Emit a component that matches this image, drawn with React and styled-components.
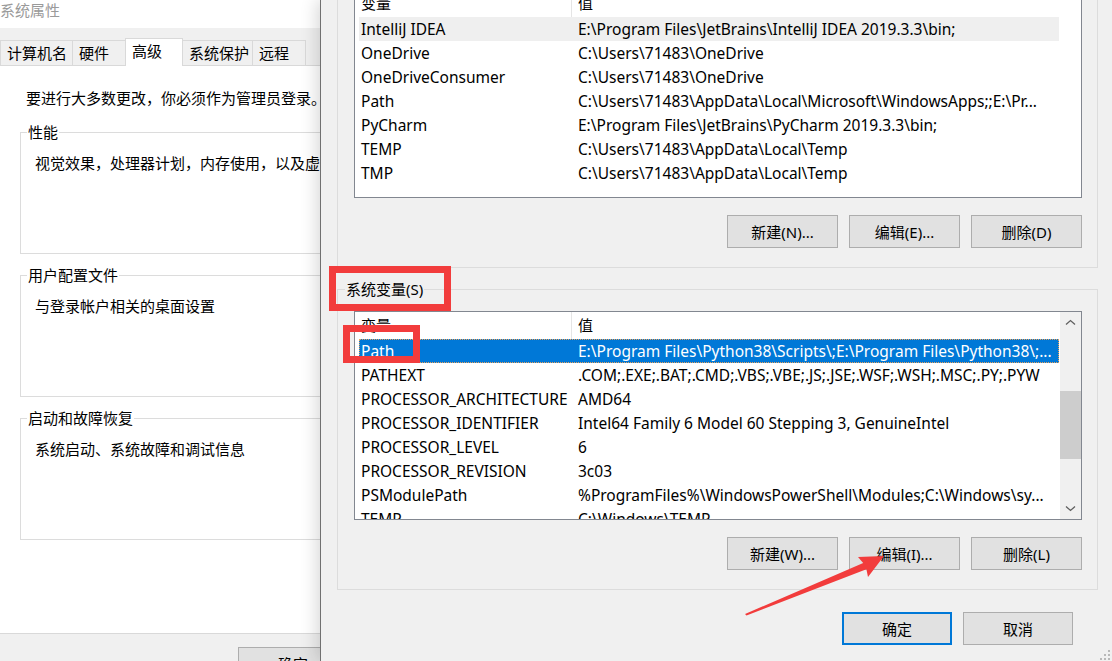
import React from "react";
import styled, { createGlobalStyle } from "styled-components";

const GlobalStyle = createGlobalStyle`
  html, body { margin: 0; padding: 0; background: #f0f0f0; }
  body {
    font-family: "Noto Sans", "Noto Sans CJK SC", sans-serif;
    font-size: 15px;
    color: #000;
  }
  * { box-sizing: border-box; }
`;

const Screen = styled.div`
  position: relative;
  display: flex;
  width: 1112px;
  height: 661px;
  overflow: hidden;
  background: #f0f0f0;
`;

/* ---------- 系统属性 (window behind) ---------- */

const PropsWindow = styled.div`
  flex: 0 0 320px;
  overflow: hidden;
  display: flex;
  flex-direction: column;
  background: #f0f0f0;
`;

const TitleBar = styled.div`
  flex: none;
  height: 28px;
  background: #fff;
  color: #9a9a9a;
  line-height: 20px;
  white-space: nowrap;
`;

const TabStrip = styled.div`
  flex: none;
  display: flex;
  align-items: flex-end;
  height: 37px;
  white-space: nowrap;
`;

const Tab = styled.div`
  position: relative;
  flex: none;
  width: ${(p) => p.$w}px;
  height: ${(p) => (p.$active ? 28 : 25)}px;
  margin-right: -1px;
  margin-bottom: ${(p) => (p.$active ? -1 : 0)}px;
  padding-left: 6px;
  border: 1px solid #d9d9d9;
  border-bottom: none;
  background: ${(p) => (p.$active ? "#fff" : "#f0f0f0")};
  line-height: 24px;
  z-index: ${(p) => (p.$active ? 2 : 1)};
`;

const TabPanel = styled.div`
  flex: none;
  width: 420px;
  height: 569px;
  margin-left: -1px;
  padding: 22px 0 0 20px;
  background: #fff;
  border: 1px solid #d9d9d9;
`;

const Notice = styled.div`
  margin: 0 0 14px 6px;
  line-height: 20px;
  white-space: nowrap;
`;

const PanelGroup = styled.fieldset`
  width: 400px;
  margin: 0 0 11px;
  padding: 0;
  border: 1px solid #dcdcdc;
  min-width: 0;
`;

const PanelLegend = styled.legend`
  margin-left: 6px;
  padding: 0 1px;
  line-height: 20px;
`;

const PanelBody = styled.div`
  height: 111px;
  padding: 11px 0 0 14px;
  line-height: 20px;
  white-space: nowrap;
`;

const PropsFooter = styled.div`
  flex: 1;
  padding: 13px 0 0 238px;
`;

/* ---------- 环境变量 (front window) ---------- */

const EnvWindow = styled.div`
  position: relative;
  z-index: 1;
  flex: 1;
  display: flex;
  flex-direction: column;
  padding: 0 14px 0 16px;
  background: #f0f0f0;
  border-left: 1px solid #707070;
  box-shadow: -3px 0 16px rgba(0, 0, 0, 0.16);
`;

const Group = styled.fieldset`
  margin: ${(p) => p.$top}px 0 0;
  padding: 12px 15px 19px 16px;
  border: 1px solid #dcdcdc;
  min-width: 0;
`;

const Legend = styled.legend`
  margin-left: -9px;
  padding: 0 1px;
  line-height: 20px;
`;

const VarList = styled.div`
  display: flex;
  height: 209px;
  background: #fff;
  border: 1px solid #828790;
`;

const ListBody = styled.div`
  flex: 1;
  min-width: 0;
  padding-left: 4px;
  overflow: hidden;
`;

const HeaderRow = styled.div`
  display: grid;
  grid-template-columns: 213px 1fr;
  width: 700px;
  height: 27px;
  line-height: 27px;
`;

const HeaderCell = styled.div`
  padding-left: ${(p) => (p.$first ? 2 : 6)}px;
  border-right: ${(p) => (p.$first ? "1px solid #e5e5e5" : "none")};
  white-space: nowrap;
`;

const Row = styled.div`
  display: grid;
  grid-template-columns: 217px 1fr;
  width: 700px;
  height: 24px;
  line-height: 24px;
  font-size: 15.5px;
  white-space: nowrap;
  background: ${(p) => (p.$selected ? "#0078d7" : p.$hover ? "#efefef" : "transparent")};
  color: ${(p) => (p.$selected ? "#fff" : "#000")};
  outline: ${(p) => (p.$selected ? "1px dotted #e9a25c" : "none")};
  outline-offset: -1px;
`;

const Cell = styled.div`
  padding-left: 2px;
  overflow: hidden;
`;

const ScrollBar = styled.div`
  flex: none;
  width: 21px;
  display: flex;
  flex-direction: column;
  background: #f0f0f0;
`;

const ScrollArrow = styled.div`
  flex: none;
  height: 21px;
  display: flex;
  align-items: center;
  justify-content: center;
`;

const ScrollTrack = styled.div`
  flex: 1;
`;

const Thumb = styled.div`
  height: 68px;
  margin-top: 58px;
  background: #cdcdcd;
`;

const ButtonRow = styled.div`
  display: flex;
  justify-content: flex-end;
  gap: 11px;
  margin-top: 17px;
`;

const Button = styled.button`
  width: ${(p) => p.$w || 111}px;
  height: 33px;
  padding: 0;
  font: inherit;
  color: #000;
  background: #e1e1e1;
  border: ${(p) => (p.$primary ? "2px solid #0078d7" : "1px solid #adadad")};
  white-space: nowrap;
`;

const Footer = styled.div`
  display: flex;
  justify-content: flex-end;
  gap: 11px;
  margin-top: 22px;
  padding-right: 25px;
`;

const Grip = styled.svg`
  position: absolute;
  right: 2px;
  bottom: 1px;
`;

const Overlay = styled.svg`
  position: absolute;
  left: 0;
  top: 0;
  pointer-events: none;
  z-index: 5;
`;

const userVars = [
  ["IntelliJ IDEA", "E:\\Program Files\\JetBrains\\IntelliJ IDEA 2019.3.3\\bin;"],
  ["OneDrive", "C:\\Users\\71483\\OneDrive"],
  ["OneDriveConsumer", "C:\\Users\\71483\\OneDrive"],
  ["Path", "C:\\Users\\71483\\AppData\\Local\\Microsoft\\WindowsApps;;E:\\Pr..."],
  ["PyCharm", "E:\\Program Files\\JetBrains\\PyCharm 2019.3.3\\bin;"],
  ["TEMP", "C:\\Users\\71483\\AppData\\Local\\Temp"],
  ["TMP", "C:\\Users\\71483\\AppData\\Local\\Temp"],
];

const sysVars = [
  ["Path", "E:\\Program Files\\Python38\\Scripts\\;E:\\Program Files\\Python38\\;..."],
  ["PATHEXT", ".COM;.EXE;.BAT;.CMD;.VBS;.VBE;.JS;.JSE;.WSF;.WSH;.MSC;.PY;.PYW"],
  ["PROCESSOR_ARCHITECTURE", "AMD64"],
  ["PROCESSOR_IDENTIFIER", "Intel64 Family 6 Model 60 Stepping 3, GenuineIntel"],
  ["PROCESSOR_LEVEL", "6"],
  ["PROCESSOR_REVISION", "3c03"],
  ["PSModulePath", "%ProgramFiles%\\WindowsPowerShell\\Modules;C:\\Windows\\sy..."],
  ["TEMP", "C:\\Windows\\TEMP"],
];

const tabs = [
  ["计算机名", 73],
  ["硬件", 54],
  ["高级", 58],
  ["系统保护", 71],
  ["远程", 54],
];

const Chevron = ({ down }) => (
  <svg width="11" height="7" viewBox="0 0 11 7">
    <path
      d={down ? "M1 1.5 L5.5 5.5 L10 1.5" : "M1 5.5 L5.5 1.5 L10 5.5"}
      fill="none"
      stroke="#606060"
      strokeWidth="1.3"
    />
  </svg>
);

function VariableList({ rows, selected, hover, scroll }) {
  return (
    <VarList>
      <ListBody>
        <HeaderRow>
          <HeaderCell $first>变量</HeaderCell>
          <HeaderCell>值</HeaderCell>
        </HeaderRow>
        {rows.map(([name, value], i) => (
          <Row key={name + i} $selected={i === selected} $hover={i === hover}>
            <Cell>{name}</Cell>
            <Cell>{value}</Cell>
          </Row>
        ))}
      </ListBody>
      {scroll && (
        <ScrollBar>
          <ScrollArrow>
            <Chevron />
          </ScrollArrow>
          <ScrollTrack>
            <Thumb />
          </ScrollTrack>
          <ScrollArrow>
            <Chevron down />
          </ScrollArrow>
        </ScrollBar>
      )}
    </VarList>
  );
}

export default function App() {
  return (
    <Screen>
      <GlobalStyle />
      <PropsWindow>
        <TitleBar>系统属性</TitleBar>
        <TabStrip>
          {tabs.map(([label, w]) => (
            <Tab key={label} $w={w} $active={label === "高级"}>
              {label}
            </Tab>
          ))}
        </TabStrip>
        <TabPanel>
          <Notice>要进行大多数更改，你必须作为管理员登录。</Notice>
          <PanelGroup>
            <PanelLegend>性能</PanelLegend>
            <PanelBody>视觉效果，处理器计划，内存使用，以及虚拟内存</PanelBody>
          </PanelGroup>
          <PanelGroup>
            <PanelLegend>用户配置文件</PanelLegend>
            <PanelBody>与登录帐户相关的桌面设置</PanelBody>
          </PanelGroup>
          <PanelGroup>
            <PanelLegend>启动和故障恢复</PanelLegend>
            <PanelBody>系统启动、系统故障和调试信息</PanelBody>
          </PanelGroup>
        </TabPanel>
        <PropsFooter>
          <Button $w={110}>确定</Button>
        </PropsFooter>
      </PropsWindow>

      <EnvWindow>
        <Group $top={-43}>
          <Legend>用户变量(U)</Legend>
          <VariableList rows={userVars} hover={0} />
          <ButtonRow>
            <Button>新建(N)...</Button>
            <Button>编辑(E)...</Button>
            <Button>删除(D)</Button>
          </ButtonRow>
        </Group>
        <Group $top={11}>
          <Legend>系统变量(S)</Legend>
          <VariableList rows={sysVars} selected={0} scroll />
          <ButtonRow>
            <Button>新建(W)...</Button>
            <Button>编辑(I)...</Button>
            <Button>删除(L)</Button>
          </ButtonRow>
        </Group>
        <Footer>
          <Button $w={110} $primary>确定</Button>
          <Button $w={110}>取消</Button>
        </Footer>
        <Grip width="10" height="10" viewBox="0 0 10 10">
          {[
            [8, 0], [8, 4], [4, 4], [8, 8], [4, 8], [0, 8],
          ].map(([x, y]) => (
            <rect key={x + "-" + y} x={x} y={y} width="2" height="2" fill="#b8b8b8" />
          ))}
        </Grip>
      </EnvWindow>

      <Overlay width="1112" height="661" viewBox="0 0 1112 661">
        <rect x="332.5" y="269.5" width="115" height="38" fill="none" stroke="#f23c3c" strokeWidth="7" />
        <rect x="346.5" y="328.5" width="70" height="31" fill="none" stroke="#f23c3c" strokeWidth="7" />
        <polygon
          points="745,614 863.2,563.1 858,557 884,556 868,577 866.4,569.3 746.5,615.5"
          fill="#f23c3c"
        />
      </Overlay>
    </Screen>
  );
}
